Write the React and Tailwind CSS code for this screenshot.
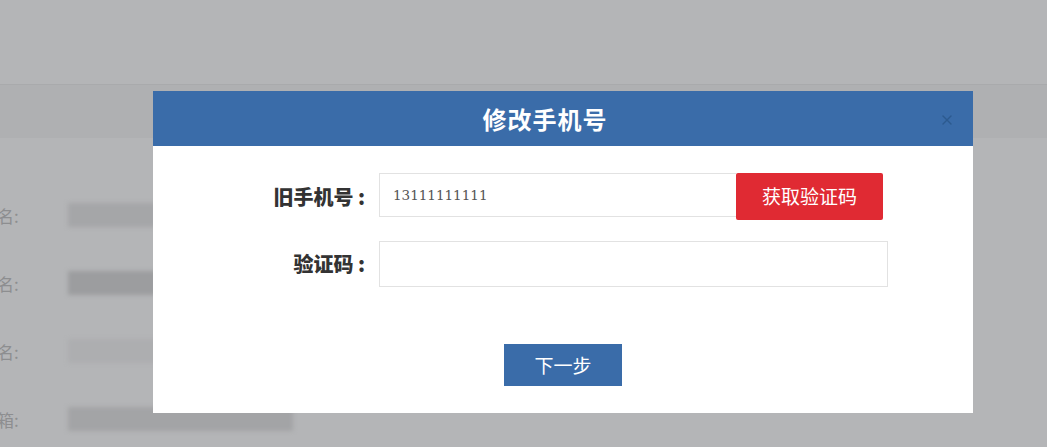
import { X } from 'lucide-react';

const rows = [
    { label: '名:', w: 'w-[88px]', tone: 'bg-[#a5a6a8]' },
    { label: '名:', w: 'w-[88px]', tone: 'bg-[#9c9d9f]' },
    { label: '名:', w: 'w-[94px]', tone: 'bg-[#adaeb0]' },
    { label: '箱:', w: 'w-[225px]', tone: 'bg-[#a3a4a6]' },
];

const ChangePhone = () => {
    return (
        <div className="relative w-[1047px] h-[447px] overflow-hidden bg-[#b4b5b7] font-['Noto_Sans_CJK_SC',sans-serif]">
            {/* Page behind the mask */}
            <div className="h-[85px] border-b border-[#a9aaac]" />
            <div className="h-[53px] bg-[#afb0b2]" />
            <div className="pt-[67px] flex flex-col gap-[48px]">
                {rows.map((r, i) => (
                    <div key={i} className="flex items-center h-[20px]">
                        <span className="w-[71px] -ml-[3px] text-[17px] text-[#8d8e90] leading-none">{r.label}</span>
                        <div className={`${r.w} h-[24px] ${r.tone} blur-[2px]`} />
                    </div>
                ))}
            </div>

            {/* Modal */}
            <div className="absolute left-[153px] top-[91px] w-[820px] h-[322px] bg-white flex flex-col">
                <div className="h-[55px] bg-[#3a6ca9] flex items-center relative">
                    <h2 className="flex-1 text-center pr-[36px] text-white text-[24px] font-bold tracking-[1px]">修改手机号</h2>
                    <button className="absolute right-[18px] top-[21px] text-[#2c5a8f]">
                        <X size={16} strokeWidth={2} />
                    </button>
                </div>

                <div className="flex flex-col pt-[27px]">
                    <div className="flex items-center">
                        <label className="w-[212px] text-right text-[20px] font-black text-[#333]">旧手机号 :</label>
                        <div className="ml-[14px] flex items-stretch">
                            <input
                                type="text"
                                defaultValue="13111111111"
                                className="w-[357px] h-[44px] border border-[#e2e2e2] border-r-0 px-[13px] text-[13.5px] text-[#555] font-['DejaVu_Serif',serif] outline-none"
                            />
                            <button className="w-[147px] h-[47px] bg-[#e02a33] text-white text-[19px] rounded-[2px]">获取验证码</button>
                        </div>
                    </div>

                    <div className="flex items-center mt-[21px]">
                        <label className="w-[212px] text-right text-[20px] font-black text-[#333]">验证码 :</label>
                        <input
                            type="text"
                            className="ml-[14px] w-[509px] h-[46px] border border-[#e2e2e2] px-[13px] outline-none"
                        />
                    </div>

                    <div className="flex justify-center mt-[57px]">
                        <button className="w-[118px] h-[42px] bg-[#3a6ca9] text-white text-[19px]">下一步</button>
                    </div>
                </div>
            </div>
        </div>
    );
};

export default ChangePhone;
